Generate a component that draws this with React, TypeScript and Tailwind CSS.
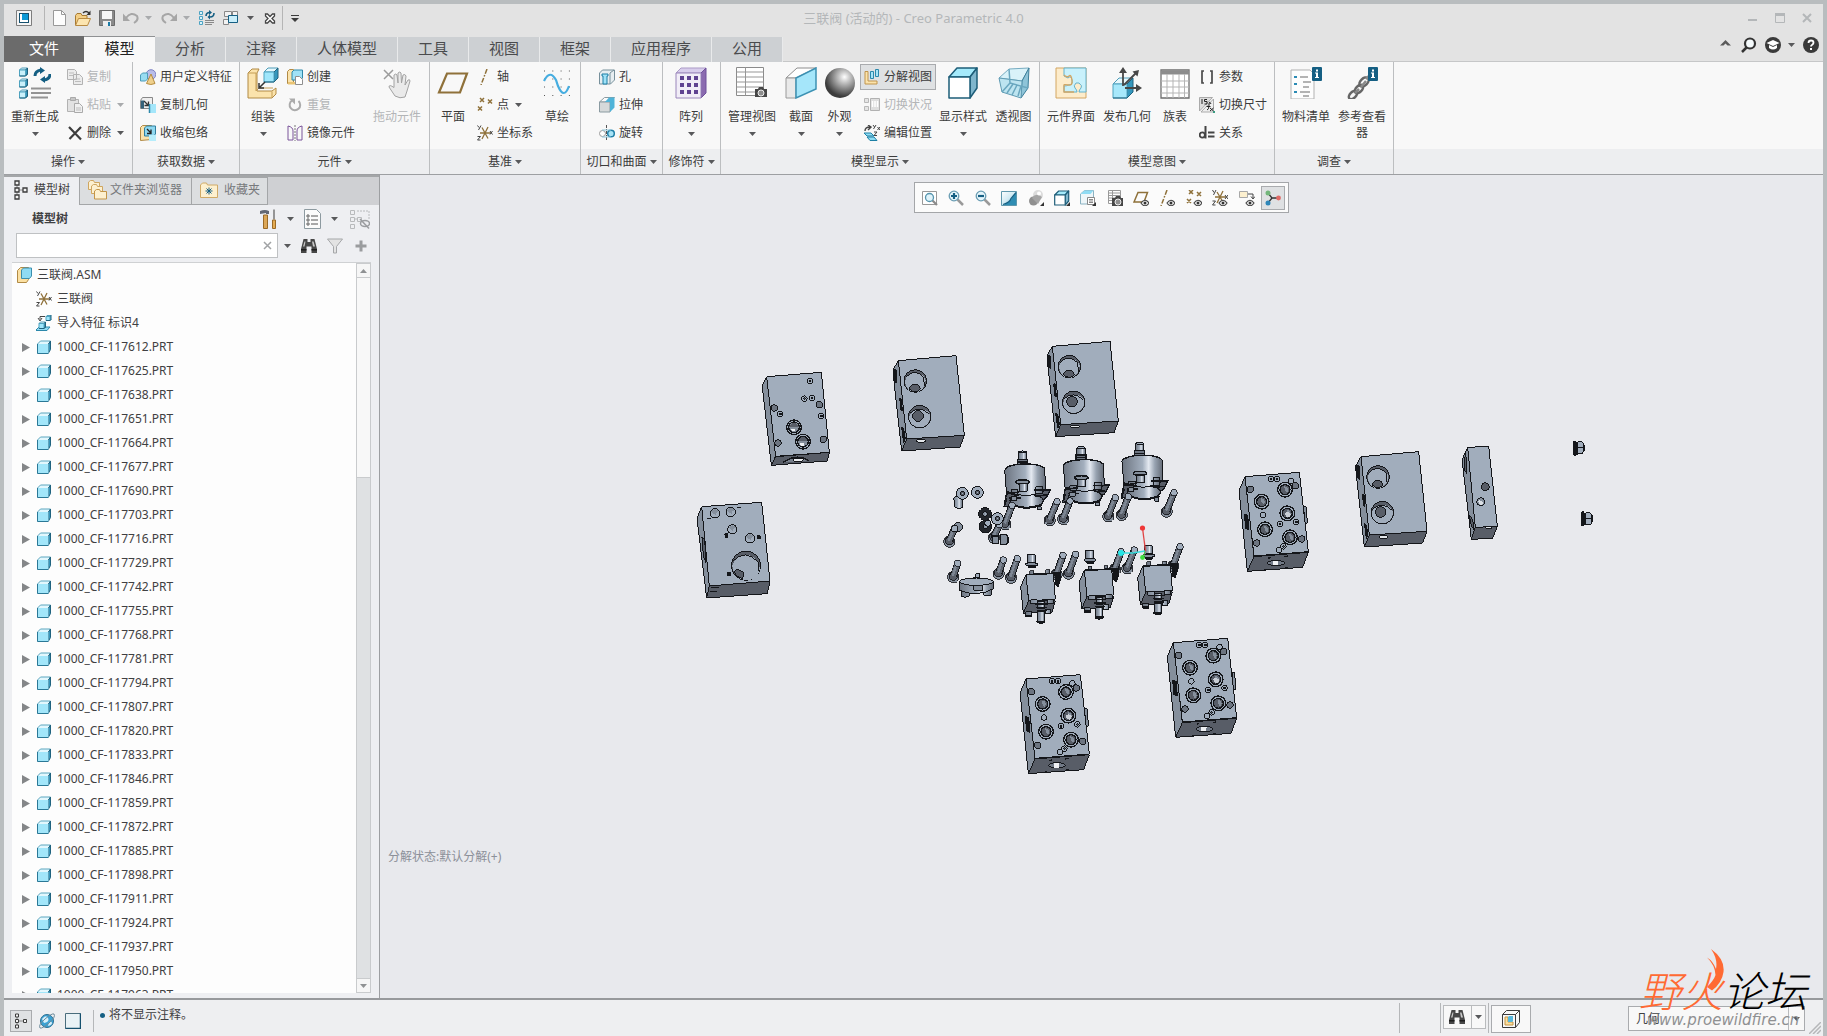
import React from "react";

type Kids = { children?: React.ReactNode };

/* ---------- drawing helpers ---------- */

function Ico({ s = 16, children }: Kids & { s?: 16 | 32 }) {
  return (
    <svg
      viewBox={s === 32 ? "0 0 32 32" : "0 0 16 16"}
      className={s === 32 ? "size-8 shrink-0" : "size-4 shrink-0"}
      fill="none"
      aria-hidden="true"
    >
      {children}
    </svg>
  );
}

function Down({ dim = false }: { dim?: boolean }) {
  return (
    <svg viewBox="0 0 7 4" className="h-1 w-[7px] shrink-0" aria-hidden="true">
      <path d="M0 0h7L3.5 4z" fill={dim ? "#a9abad" : "#58595b"} />
    </svg>
  );
}

/* blue box with a light top and a darker right side */
function Cube({ x, y, w, d, face = "#9fe6fb" }: { x: number; y: number; w: number; d: number; face?: string }) {
  return (
    <g stroke="#20637f" strokeWidth="1" strokeLinejoin="round">
      <path d={`M${x} ${y + d}l${d} ${-d}h${w}l${-d} ${d}z`} fill="#e6f8fd" stroke="#4f9cb8" />
      <path d={`M${x + w} ${y + d}l${d} ${-d}v${w}l${-d} ${d}z`} fill="#3597bd" />
      <path d={`M${x} ${y + d}h${w}v${w}h${-w}z`} fill={face} stroke="#4fa3c0" />
      <path d={`M${x} ${y + d + w}h${w}l${d} ${-d}`} />
    </g>
  );
}

function MiniBoxes() {
  return (
    <g>
      {[1, 12, 23].map((y) => (
        <Cube key={y} x={0.5} y={y} w={6} d={2} face="#c9f0fb" />
      ))}
    </g>
  );
}

function Camera({ x, y }: { x: number; y: number }) {
  return (
    <g>
      <path d={`M${x} ${y + 2}h3l1-2h4l1 2h3v8h-12z`} fill="#474747" />
      <circle cx={x + 6} cy={y + 6} r="3" fill="#8e8e8e" stroke="#eee" />
    </g>
  );
}

function Eye({ x, y }: { x: number; y: number }) {
  return (
    <g>
      <path d={`M${x} ${y + 3}q4-5.5 8 0q-4 5.5-8 0z`} fill="#fff" stroke="#474747" strokeWidth="1.2" />
      <circle cx={x + 4} cy={y + 3} r="1.5" fill="#333" />
    </g>
  );
}

function InfoBadge() {
  return (
    <g>
      <rect x="22" y="0" width="10" height="14" rx="1" fill="#155f83" />
      <path d="M26 2.500h2v2h-2zM25 5.500h3v4.500h1v1h-4v-1h1v-3.500h-1z" fill="#fff" />
    </g>
  );
}

const tan = "#8f713a";

function Axes() {
  return (
    <Ico>
      <path d="M3 8h11M5 2.500l6 11M11 2l-6 12" stroke={tan} strokeWidth="1.3" />
      <path d="M.5.500l1.500 2M4 .500l-2.500 4.500M.5 11.500h3l-3 3.500h3M13 6l2.500 3.500M15.500 6L13 9.500" stroke="#444" />
    </Ico>
  );
}

function Points() {
  return (
    <Ico>
      <path d="M3 1l4 4M7 1l-4 4M11 2.500l4 4M15 2.500l-4 4M1 9.500l4 4M5 9.500l-4 4" stroke={tan} strokeWidth="1.500" />
    </Ico>
  );
}

function AxisLine() {
  return (
    <Ico>
      <path d="M10 0L4 16" stroke={tan} strokeWidth="1.500" strokeDasharray="5 1.500 1.500 1.500" />
    </Ico>
  );
}

function TreeGlyph() {
  return (
    <svg viewBox="0 0 14 20" className="h-5 w-3.5 shrink-0" fill="none" aria-hidden="true">
      <path d="M3 5v10M3 10h6" stroke="#8a8a8a" />
      <path d="M1 1h4v4H1zM1 8h4v4H1zM1 15h4v4H1zM9 8h4v4H9z" stroke="#3d3d3d" strokeWidth="1.300" fill="#f4f4f4" />
    </svg>
  );
}

function Binoculars() {
  return (
    <Ico>
      <path d="M2.500 1h4v3h3V1h4l2.500 10v4h-5.500V8.500h-5V15H0v-4z" fill="#474747" />
      <path d="M2 8.500l1.500-5 1 0-1 5zM12 8.500l-1-5 1.500 0 1.500 5z" fill="#c9c9c9" />
      <path d="M0 11h5.500v1.500H0zM10.500 11H16v1.500h-5.500z" fill="#1d1d1d" />
    </Ico>
  );
}

/* ---------- ribbon icons, 32 px ---------- */

const big: Record<string, React.ReactNode> = {
  regen: (
    <Ico s={32}>
      <MiniBoxes />
      <path d="M16 9q0-5 6-6M31 7q0 5-6 6" stroke="#155f83" strokeWidth="3" />
      <path d="M21 0l5 3.500-5 3.500zM26 16l-5-3.500 5-3.500z" fill="#155f83" />
      <path d="M12 21.500h20M12 26h20M12 30.500h17" stroke="#939393" strokeWidth="2" />
    </Ico>
  ),
  assemble: (
    <Ico s={32}>
      <path d="M1 6l4-4h7l-2 4v18h15l4-3v6l-4 4H1z" fill="#fbe3ac" stroke="#b18a45" />
      <path d="M9 6v18M1.500 6h8M25 24.500v6M9 24l3-3h14" stroke="#c49d55" />
      <Cube x={17} y={1} w={10} d={4} />
      <path d="M18 15l-5 5M12 16v5h5" stroke="#333" strokeWidth="1.500" />
    </Ico>
  ),
  hand: (
    <Ico s={32}>
      <path d="M3 3l9 9M12 3l-9 9" stroke="#9b9b9b" strokeWidth="1.500" />
      <path
        d="M14 29l-6-9q0-3 5 .5V8q2-2 3 0l1 8V6q2-2 3 0l.5 10L22 8q2-1.500 3 1l-1 9 3-5q2-1 2 1l-3 10-2 6q-5 2-10-1z"
        fill="#eaeaea"
        stroke="#a2a2a2"
      />
    </Ico>
  ),
  plane: (
    <Ico s={32}>
      <path d="M10 6.500h20l-7 19H2z" stroke={tan} strokeWidth="2.200" />
    </Ico>
  ),
  sketch: (
    <Ico s={32}>
      <path d="M3 4h27M3 12h27M3 20h27M3 28.500h27" stroke="#555" strokeDasharray="1 7.300" />
      <path d="M3 14q6-12 12-1l2 6q6 14 11 0" stroke="#46ade0" strokeWidth="2.200" />
    </Ico>
  ),
  pattern: (
    <Ico s={32}>
      <path d="M1 6l5-5h25l-5 5z" fill="#d8cdec" stroke="#ab9bc6" />
      <path d="M26 6l5-5v25l-5 5z" fill="#8b6bb0" stroke="#6f519b" />
      <path d="M1 6h25v25H1z" fill="#f1edf7" stroke="#9a86bb" />
      <path
        d="M5 9h4v4H5zM12 9h4v4h-4zM19 9h4v4h-4zM5 16h4v4H5zM12 16h4v4h-4zM19 16h4v4h-4zM5 23h4v4H5zM12 23h4v4h-4zM19 23h4v4h-4z"
        fill="#5f4291"
      />
    </Ico>
  ),
  views: (
    <Ico s={32}>
      <path d="M.5.500h27v28H.5z" fill="#fff" stroke="#8b8b8b" />
      <path d="M.5 5h27M.5 10h27M.5 15h27M.5 20h27M.5 25h27M9.500.500v28" stroke="#979797" />
      <Camera x={19} y={20} />
    </Ico>
  ),
  section: (
    <Ico s={32}>
      <path d="M1 11L12 1h19L11 11z" fill="#fff" stroke="#8e8e8e" />
      <path d="M1 11h10v20H1z" fill="#e9e9e9" stroke="#9a9a9a" />
      <path d="M11 11L31 1v21L11 31z" fill="#a5e6fa" stroke="#3c91b3" strokeWidth="1.500" />
    </Ico>
  ),
  look: (
    <Ico s={32}>
      <defs>
        <radialGradient id="ball" cx=".65" cy=".3" r=".65">
          <stop offset="0" stopColor="#fff" />
          <stop offset=".3" stopColor="#c2c2c2" />
          <stop offset="1" stopColor="#3c3c3c" />
        </radialGradient>
      </defs>
      <circle cx="16" cy="16" r="15" fill="url(#ball)" />
    </Ico>
  ),
  shade: (
    <Ico s={32}>
      <g stroke="#1d5d78" strokeWidth="1.500" strokeLinejoin="round">
        <path d="M2 10L10 1h20l-7 9z" fill="#a5eafb" />
        <path d="M23 10l7-9v20l-7 10z" fill="#7fb6cd" />
        <path d="M2 10h21v21H2z" fill="#fff" />
      </g>
    </Ico>
  ),
  persp: (
    <Ico s={32}>
      <path d="M1 11L11 2l20-1-7 13z" fill="#d9f2f9" stroke="#76abc0" />
      <path d="M24 14l7-13-1 20-7 10z" fill="#8ec4d8" stroke="#3d7f9a" />
      <path d="M1 11l23 3-1 17-19-6z" fill="#bde4f0" stroke="#5f9bb3" />
      <path d="M11 2l1 14 18 5M12 16l-8 9M15 17l-6 9M19 18l-5 10M23 19l-3 10" stroke="#6aa7bf" strokeWidth="1.500" />
    </Ico>
  ),
  puzzle: (
    <Ico s={32}>
      <path d="M1 1h30v30H1z" fill="#fdeccb" stroke="#d3a663" />
      <path
        d="M9 1h22v24h-7q0-2 2-4t-2-5h-3q-3 3-1 5t2 4H9v-6q3 0 4-1 5 0 4-5t-4-2l-4-2z"
        fill="#c9f1fb"
        stroke="#64b2cd"
      />
      <path d="M9 8q3 3 5 1t3 4-4 5-4 1v6h10" stroke="#d3a663" strokeWidth="1.300" />
    </Ico>
  ),
  publish: (
    <Ico s={32}>
      <Cube x={2} y={11} w={14} d={6} face="#a7e8fb" />
      <path d="M12 19V3M14 21h15M13 18L26 5" stroke="#474747" strokeWidth="1.800" />
      <path d="M12 0l4 6H8zM31 21l-6 4v-8zM28 3l-6.500 1.500 5 5z" fill="#474747" />
    </Ico>
  ),
  table: (
    <Ico s={32}>
      <path d="M2 3h28v28H2z" fill="#fff" stroke="#6e6e6e" strokeWidth="1.300" />
      <path d="M2 5.500h28" stroke="#8c8c8c" strokeWidth="4" />
      <path d="M2 14h28M2 20h28M2 26h28M8 7v24M14 7v24M20 7v24M25.500 7v24" stroke="#b5b5b5" />
    </Ico>
  ),
  bom: (
    <Ico s={32}>
      <path d="M1 3h19l4 4v25H1z" fill="#fdfdfd" stroke="#b1b1b1" />
      <path d="M10 10h8M13 15h8M13 20h6M10 25h10M13 29h6" stroke="#9b9b9b" strokeWidth="1.300" />
      <path d="M4 9h3v2H4zM4 16h3v2H4zM4 24h3v2H4z" fill="#2b8bb5" />
      <InfoBadge />
    </Ico>
  ),
  chain: (
    <Ico s={32}>
      <g stroke="#666" strokeWidth="2.500">
        <ellipse cx="7" cy="28" rx="5" ry="3" transform="rotate(-45 7 28)" />
        <ellipse cx="13" cy="22" rx="5" ry="3" transform="rotate(-45 13 22)" />
        <ellipse cx="18" cy="15" rx="5.500" ry="3.500" transform="rotate(-45 18 15)" />
        <path d="M9 26l4-4M15 20l5-6M20 12l4-4" stroke="#8a8a8a" />
      </g>
      <InfoBadge />
    </Ico>
  ),
};

/* ---------- ribbon icons, 16 px ---------- */

const small: Record<string, React.ReactNode> = {
  copy: (
    <Ico>
      <path d="M.5.500h7l2 2v8h-9zM6.500 5.500h6l3 3v7h-9z" fill="#ececec" stroke="#b2b2b2" />
      <path d="M2 4h5M2 6.500h4M8 10h5M8 12.500h6" stroke="#bdbdbd" />
    </Ico>
  ),
  paste: (
    <Ico>
      <path d="M.5 2.500h11v12h-11z" fill="#e2e2e2" stroke="#b2b2b2" />
      <path d="M3.500.500h5v3h-5z" fill="#c6c6c6" stroke="#aaa" />
      <path d="M7.500 6.500h5l3 3v6h-8z" fill="#f0f0f0" stroke="#aaa" />
      <path d="M9 11h5M9 13h5" stroke="#bdbdbd" />
    </Ico>
  ),
  del: (
    <Ico>
      <path d="M2 2l12 12.500M14 2L2.500 14" stroke="#3d3d3d" strokeWidth="2.200" />
    </Ico>
  ),
  udf: (
    <Ico>
      <circle cx="11" cy="5.500" r="4.800" fill="#b9bde9" stroke="#7d82c4" />
      <path d="M.5 6l2-2h5v6l-2 2h-5z" fill="#98dcf2" stroke="#4d9cb9" />
      <path d="M11 5l4 9.500q-4 2-8.500 0z" fill="#efd08c" stroke="#b58c40" />
    </Ico>
  ),
  copygeo: (
    <Ico>
      <path d="M.5 3.500l2-3h10v9l-2 2h-10z" fill="#eee" stroke="#888" />
      <path d="M1 3.500h3v8H1z" fill="#35627a" />
      <path d="M4 4l4 4M8.500 4.500v4h-4" stroke="#333" strokeWidth="1.300" />
      <path d="M9 7h7v9H9z" fill="#a4e6fa" />
      <path d="M9.500 7v9" stroke="#2f89ab" strokeWidth="1.500" />
    </Ico>
  ),
  shrink: (
    <Ico>
      <path d="M.5 2.500l2-2h9v14l-11 1z" fill="#fbe3ac" stroke="#b18a45" />
      <path d="M4.500 3l2-2h9v8l-2 2h-9z" fill="#8ed8f0" stroke="#2f7f9f" />
      <path d="M7 4l4 4M11 4.500V8.500H7" stroke="#222" strokeWidth="1.300" />
      <path d="M9 10h7v6H9z" fill="#b6edfb" />
    </Ico>
  ),
  create: (
    <Ico>
      <path d="M.5 2.500l2-2h4v14h-6z" fill="#fbe3ac" stroke="#b18a45" />
      <path d="M1 13h8v2.500H1z" fill="#e9c474" />
      <path d="M5 3l2-2h8.500v8l-2 2H5z" fill="#9fe2f7" stroke="#2f89ab" />
      <path d="M8.500 7.500h4l3 3v5h-7z" fill="#fff" stroke="#8e8e8e" />
    </Ico>
  ),
  repeat: (
    <Ico>
      <path d="M5 3.500a5.300 5.300 0 1 0 6.500.5" stroke="#ababab" strokeWidth="2" />
      <path d="M2 1.500h6v6z" fill="#ababab" />
    </Ico>
  ),
  mirror: (
    <Ico>
      <path d="M1 1q5 1 5 5v9H1z" stroke="#7b549a" />
      <path d="M8 0v16" stroke="#777" strokeDasharray="2 1" />
      <path d="M15 1q-5 1-5 5v9h5z" stroke="#7b549a" />
    </Ico>
  ),
  axis: <AxisLine />,
  point: <Points />,
  csys: <Axes />,
  hole: (
    <Ico>
      <path d="M.5 4l3-3h12v10l-4 4H.5z" fill="#e7eef1" stroke="#77909b" />
      <path d="M11 4v11M11 4l4-3" stroke="#77909b" />
      <path d="M3 5h6v2H8v8H4V7H3z" fill="#9fe2f7" stroke="#1f7fa5" />
    </Ico>
  ),
  extrude: (
    <Ico>
      <path d="M.5 5l5-4.500h10L11 5z" fill="#fafafa" stroke="#8a9aa1" />
      <path d="M.5 5H11v10H.5z" fill="#d6d9da" stroke="#8a9aa1" />
      <path d="M11 5l4.500-4.500v10L11 15zM6 5L10 .500h5.500L11 5z" fill="#4fb3d8" />
    </Ico>
  ),
  revolve: (
    <Ico>
      <circle cx="3.500" cy="8.500" r="3" stroke="#9a9a9a" fill="#fff" />
      <circle cx="12" cy="8.500" r="3.300" stroke="#2080a8" strokeWidth="1.500" fill="#a8e3f6" />
      <path d="M7.500 0v16" stroke="#555" strokeDasharray="3 1 1 1" />
      <path d="M3 5h9M3 12h9" stroke="#8ec6da" />
    </Ico>
  ),
  explode: (
    <Ico>
      <path d="M1 2.500h3v9.500h9v3H1z" fill="#fbe3ac" stroke="#c1954c" />
      <path d="M6.500 2.500h3v7h-3zM11.500.500h3v7h-3z" fill="#a7e4f7" stroke="#2c88ab" />
    </Ico>
  ),
  state: (
    <Ico>
      <path d="M.5 1.500h4v4h-4zM.5 9.500h4v4h-4z" fill="#e5e5e5" stroke="#b8b8b8" />
      <path d="M6.500 1.500h9v12h-9z" fill="#dedede" stroke="#b1b1b1" />
      <path d="M8.500 4v6M11 4v6M13.500 4v6" stroke="#fff" strokeWidth="1.500" />
    </Ico>
  ),
  editpos: (
    <Ico>
      <path d="M1 6q0-4 5-4M4 0l3 2-3 3" stroke="#444" strokeWidth="1.400" />
      <path d="M9 0l1.500 2M12 0L9.500 4M13.500 2l2.500 3M16 2l-2.500 3M10 7h3l-3 3.500h3" stroke="#444" />
      <path d="M0 8h7l3 3H3zM3 12h7l3 3.500H6z" fill="#8edcf4" stroke="#1d80a5" />
    </Ico>
  ),
  params: (
    <Ico>
      <path d="M5 2H3v12h2M11 2h2v12h-2" stroke="#4a4a4a" strokeWidth="1.700" />
    </Ico>
  ),
  dims: (
    <Ico>
      <path d="M.5.500h13L.5 14z" fill="#ddd" stroke="#aaa" />
      <path d="M14.500 2v13H2z" fill="#efefef" stroke="#aaa" />
      <path d="M3 2v5M5.500 7h2.500V4.500H5.500V2.500H8M8 13q2 0 2-5t2-1M7.500 9.500h4M11 11l3.500 3M14.500 11L11 14" stroke="#222" />
      <path d="M14 14h2v2h-2z" fill="#3a9a80" />
    </Ico>
  ),
  rel: (
    <Ico>
      <circle cx="3.300" cy="10" r="2.600" stroke="#444" strokeWidth="1.800" />
      <path d="M6.500 1v12.500" stroke="#444" strokeWidth="2" />
      <path d="M9 7.500h6.500M9 11.500h6.500" stroke="#444" strokeWidth="1.800" />
    </Ico>
  ),
};

/* ---------- ribbon building blocks ---------- */

function Big({ icon, label, w, arrow, dim }: { icon: string; label: string; w: string; arrow?: boolean; dim?: boolean }) {
  return (
    <button
      type="button"
      disabled={dim}
      className={`flex shrink-0 flex-col items-center pt-[5px] ${w} ${dim ? "text-[#b3b5b7]" : "text-[#3c3c3c]"}`}
    >
      {big[icon]}
      <span className="mt-[10px] w-12 text-center leading-4 whitespace-nowrap">{label}</span>
      {arrow && (
        <span className="mt-[7px] flex">
          <Down />
        </span>
      )}
    </button>
  );
}

function Row({ icon, label, arrow, dim, on }: { icon: string; label: string; arrow?: boolean; dim?: boolean; on?: boolean }) {
  return (
    <button
      type="button"
      disabled={dim}
      aria-pressed={on}
      className={`flex h-[26px] items-center gap-1 whitespace-nowrap border ${
        on ? "border-[#a9abae] bg-[#dfe1e3] px-[3px]" : "border-transparent"
      } ${dim ? "text-[#b3b5b7]" : "text-[#3c3c3c]"}`}
    >
      {small[icon]}
      <span>{label}</span>
      {arrow && (
        <span className="ml-0.5 flex">
          <Down dim={dim} />
        </span>
      )}
    </button>
  );
}

function Col({ children, pad = "" }: Kids & { pad?: string }) {
  return <div className={`flex shrink-0 flex-col gap-0.5 pt-0.5 ${pad}`}>{children}</div>;
}

function Group({ name, w, children }: Kids & { name: string; w: string }) {
  return (
    <section aria-label={name} className={`flex shrink-0 flex-col border-r border-[#bcbec0] ${w}`}>
      <div className="flex h-[87px] bg-[#f8f8f8]">{children}</div>
      <button type="button" className="flex h-[25px] items-center justify-center gap-[3px] bg-[#edeef0] text-[#3c3c3c]">
        <span>{name}</span>
        <Down />
      </button>
    </section>
  );
}

/* ---------- title bar ---------- */

function QuickAccess() {
  return (
    <div className="flex items-center">
      <button type="button" aria-label="Creo" className="ml-3">
        <Ico>
          <path d="M.5.500h15v15H.5z" fill="#f4f4f4" stroke="#7d7d7d" />
          <path d="M3 3h10v10H3z" fill="#15506e" />
          <path d="M4 4h8v8H4z" fill="#fff" />
          <path d="M6 4h6v6H6z" fill="#0c99d6" />
        </Ico>
      </button>
      <span className="ml-3 h-6 w-px bg-[#b5b5b5]" />
      <button type="button" aria-label="新建" className="ml-[6px]">
        <Ico>
          <path d="M2.500.500h8l4 4v11h-12z" fill="#fdfdfd" stroke="#999" />
          <path d="M10.500.500v4h4" stroke="#999" />
        </Ico>
      </button>
      <button type="button" aria-label="打开" className="ml-2">
        <Ico>
          <path d="M.5 15V5.500l1.500-2h4l1 2h5v3" fill="#f3ce84" stroke="#a77a32" />
          <path d="M.5 15.500l3-7h12l-3 7z" fill="#fce5b0" stroke="#b88a42" />
          <path d="M8 3q3-3 6 0" stroke="#333" strokeWidth="1.500" />
          <path d="M15.500.500v4.500h-4z" fill="#333" />
        </Ico>
      </button>
      <button type="button" aria-label="保存" className="ml-2">
        <Ico>
          <path d="M.5.500h15v15h-15z" fill="#8a8a8a" stroke="#6b6b6b" />
          <path d="M3 1h10v8H3z" fill="#f7f7f7" />
          <path d="M4 11h8v5H4z" fill="#eee" />
          <path d="M9 12h2v4H9z" fill="#1b7aa5" />
        </Ico>
      </button>
      <button type="button" aria-label="撤消" className="ml-2 flex items-center gap-1.5">
        <Ico>
          <path d="M3 8q5-7 11-2 2 4-3 7" stroke="#a6a6a6" strokeWidth="2" />
          <path d="M0 3.500V11h7z" fill="#a6a6a6" />
        </Ico>
        <Down dim />
      </button>
      <button type="button" aria-label="重做" className="ml-[9px] flex items-center gap-1.5">
        <Ico>
          <path d="M13 8Q8 1 2 6q-2 4 3 7" stroke="#a6a6a6" strokeWidth="2" />
          <path d="M16 3.500V11H9z" fill="#a6a6a6" />
        </Ico>
        <Down dim />
      </button>
      <button type="button" aria-label="重新生成模型" className="ml-[9px]">
        <Ico>
          <path d="M.5 1.500h3v3h-3zM.5 6.500h3v3h-3zM.5 11.500h3v3h-3z" fill="#d9f3fb" stroke="#4ba3c3" />
          <path d="M7 6q0-3 3-3.500M15 3q0 4-4 4" stroke="#155f83" strokeWidth="1.600" />
          <path d="M10 0l3 2.500-3 2.500zM11 9.500L8.500 7 11 4.500z" fill="#155f83" />
          <path d="M6 10.500h9M6 12.500h9M6 14.500h7" stroke="#888" />
        </Ico>
      </button>
      <button type="button" aria-label="窗口" className="ml-2 flex items-center gap-2">
        <Ico>
          <path d="M1.500 1.500h7v5h-7zM9.500 1.500h5v5h-5zM.5 9.500h5v5h-5z" fill="#f2f2f2" stroke="#888" />
          <path d="M5.500 5.500h9v7h-9z" fill="#c9eefa" stroke="#155f83" />
        </Ico>
        <Down />
      </button>
      <button type="button" aria-label="关闭窗口" className="ml-2">
        <Ico>
          <path d="M3.500 4h2l2.500 2.500L10.500 4h2v2L10 8.500l2.500 2.500v2h-2L8 10.500 5.500 13h-2v-2L6 8.500 3.500 6z" fill="#fff" stroke="#444" strokeWidth="1.300" />
        </Ico>
      </button>
      <span className="ml-1 h-6 w-px bg-[#b5b5b5]" />
      <button type="button" aria-label="自定义快速访问工具栏" className="ml-2">
        <svg viewBox="0 0 8 7" className="h-[7px] w-2" aria-hidden="true">
          <path d="M0 0h8v1H0zM0 3h8L4 7z" fill="#3d3d3d" />
        </svg>
      </button>
    </div>
  );
}

function WindowButtons() {
  return (
    <div className="flex items-center justify-end gap-[11px] pr-2 text-[#b4b7b9]">
      <button type="button" aria-label="最小化">
        <Ico>
          <path d="M3 10h9" stroke="currentColor" strokeWidth="2" />
        </Ico>
      </button>
      <button type="button" aria-label="最大化">
        <Ico>
          <path d="M3.500 3.500h9v9h-9z" stroke="currentColor" />
          <path d="M3 3h10v3H3z" fill="currentColor" />
        </Ico>
      </button>
      <button type="button" aria-label="关闭">
        <Ico>
          <path d="M4 4l8 8M12 4l-8 8" stroke="currentColor" strokeWidth="2" />
        </Ico>
      </button>
    </div>
  );
}

const tabs = ["分析", "注释", "人体模型", "工具", "视图", "框架", "应用程序", "公用"];

function TabRow() {
  return (
    <nav className="flex h-[26px] items-stretch text-[15px] leading-none text-[#4a4b4d]">
      <button type="button" className="w-20 bg-[#6b6b6b] pb-0.5 text-white">文件</button>
      <button type="button" className="w-[71px] border-t border-[#8f9193] bg-[#f8f8f8] pb-0.5 text-[#222]">模型</button>
      {tabs.map((t) => (
        <button
          key={t}
          type="button"
          className="mt-px border-r border-[#e9eaeb] bg-[#cdd0d3] px-5 pb-0.5"
        >
          {t}
        </button>
      ))}
      <div className="flex flex-1 items-center justify-end border-b border-[#c6c7c8] pr-1 pb-2">
        <button type="button" aria-label="最小化功能区" className="mr-2.5 pb-1">
          <svg viewBox="0 0 11 6" className="h-1.5 w-[11px]" aria-hidden="true">
            <path d="M5.500 0L11 5.500H7.500L5.500 3.500 3.500 5.500H0z" fill="#5a5a5a" />
          </svg>
        </button>
        <button type="button" aria-label="命令搜索" className="mr-2">
          <Ico>
            <circle cx="9" cy="6.500" r="5" stroke="#333" strokeWidth="2.200" fill="#f5fafc" />
            <path d="M5.500 10.500L1 15" stroke="#333" strokeWidth="2.500" />
          </Ico>
        </button>
        <button type="button" aria-label="学习" className="mr-2 flex items-center gap-[7px]">
          <Ico>
            <circle cx="8" cy="8" r="8" fill="#3a3a3a" />
            <path d="M8 3l6.500 3L8 9 1.500 6z" fill="#fff" />
            <path d="M4 8l4 2 4-2v3q-4 3-8 0z" fill="#fff" />
          </Ico>
          <Down />
        </button>
        <button type="button" aria-label="帮助">
          <Ico>
            <circle cx="8" cy="8" r="8" fill="#3a3a3a" />
            <path d="M5.500 6q0-2.500 2.500-2.500t2.500 2.300q0 1.200-1.300 1.900T8 9.500" stroke="#fff" strokeWidth="1.800" />
            <path d="M7 11h2v2H7z" fill="#fff" />
          </Ico>
        </button>
      </div>
    </nav>
  );
}

function Ribbon() {
  return (
    <div className="flex border-b border-[#9d9fa2] bg-[#f8f8f8]">
      <Group name="操作" w="w-[129px]">
        <Big icon="regen" label="重新生成" w="w-[62px]" arrow />
        <Col>
          <Row icon="copy" label="复制" dim />
          <Row icon="paste" label="粘贴" arrow dim />
          <Row icon="del" label="删除" arrow />
        </Col>
      </Group>
      <Group name="获取数据" w="w-[107px]">
        <Col pad="pl-[6px]">
          <Row icon="udf" label="用户定义特征" />
          <Row icon="copygeo" label="复制几何" />
          <Row icon="shrink" label="收缩包络" />
        </Col>
      </Group>
      <Group name="元件" w="w-[190px]">
        <Big icon="assemble" label="组装" w="w-[46px]" arrow />
        <Col>
          <Row icon="create" label="创建" />
          <Row icon="repeat" label="重复" dim />
          <Row icon="mirror" label="镜像元件" />
        </Col>
        <span className="mt-2.5 ml-2 h-[67px] w-px bg-[#dcdddf]" />
        <Big icon="hand" label="拖动元件" w="w-[66px]" dim />
      </Group>
      <Group name="基准" w="w-[151px]">
        <Big icon="plane" label="平面" w="w-[46px]" />
        <Col>
          <Row icon="axis" label="轴" />
          <Row icon="point" label="点" arrow />
          <Row icon="csys" label="坐标系" />
        </Col>
        <Big icon="sketch" label="草绘" w="w-[46px]" />
      </Group>
      <Group name="切口和曲面" w="w-[82px]">
        <Col pad="pl-[17px]">
          <Row icon="hole" label="孔" />
          <Row icon="extrude" label="拉伸" />
          <Row icon="revolve" label="旋转" />
        </Col>
      </Group>
      <Group name="修饰符" w="w-[58px]">
        <Big icon="pattern" label="阵列" w="w-[56px]" arrow />
      </Group>
      <Group name="模型显示" w="w-[319px]">
        <Big icon="views" label="管理视图" w="w-[62px]" arrow />
        <Big icon="section" label="截面" w="w-[36px]" arrow />
        <Big icon="look" label="外观" w="w-[41px]" arrow />
        <Col>
          <Row icon="explode" label="分解视图" on />
          <div className="flex flex-col gap-0.5 pl-[3px]">
            <Row icon="state" label="切换状况" dim />
            <Row icon="editpos" label="编辑位置" />
          </div>
        </Col>
        <Big icon="shade" label="显示样式" w="w-[54px]" arrow />
        <Big icon="persp" label="透视图" w="w-[47px]" />
      </Group>
      <Group name="模型意图" w="w-[235px]">
        <Big icon="puzzle" label="元件界面" w="w-[62px]" />
        <Big icon="publish" label="发布几何" w="w-[50px]" />
        <Big icon="table" label="族表" w="w-[46px]" />
        <Col>
          <Row icon="params" label="参数" />
          <Row icon="dims" label="切换尺寸" />
          <Row icon="rel" label="关系" />
        </Col>
      </Group>
      <Group name="调查" w="w-[119px]">
        <Big icon="bom" label="物料清单" w="w-[62px]" />
        <button type="button" className="flex w-[50px] flex-col items-center pt-[5px] text-[#3c3c3c]">
          {big.chain}
          <span className="mt-[10px] w-12 text-center leading-4">参考查看器</span>
        </button>
      </Group>
      <div className="flex flex-1 flex-col justify-end">
        <div className="h-[25px] bg-[#edeef0]" />
      </div>
    </div>
  );
}

/* ---------- model tree ---------- */

const parts = Array.from({ length: 28 }, (_, i) => `1000_CF-${117612 + i * 13}.PRT`);

function FolderIcon({ star }: { star?: boolean }) {
  return star ? (
    <svg viewBox="0 0 18 16" className="h-4 w-[18px]" fill="none" aria-hidden="true">
      <path d="M.5 15.500V3l2-2h4l1 2h10v12.500z" fill="#fdf0cf" stroke="#d0aa66" />
      <path d="M9 5.500v7M5.500 9h7M6.500 6.500l5 5M11.500 6.500l-5 5" stroke="#155f83" />
    </svg>
  ) : (
    <svg viewBox="0 0 20 20" className="size-5" fill="none" aria-hidden="true">
      <path d="M.5 9.500V2l2-1.500h3l1 2h5v7z" fill="#fdf0cf" stroke="#cfa660" />
      <path d="M3.500 13.500V6l2-1.500h3l1 2h5v7z" fill="#fdf0cf" stroke="#cfa660" />
      <path d="M6.500 19V11l2-1.500h3l1 2h6V19z" fill="#fdf0cf" stroke="#c39548" />
    </svg>
  );
}

function ModelTree() {
  return (
    <aside className="flex w-[376px] shrink-0 flex-col border-r border-[#9d9fa2] bg-[#eeeff2] text-[#3f4042]">
      <div className="flex h-[30px] items-stretch border-t-2 border-[#a4a6a8] bg-[#cfd0d3]">
        <button type="button" className="flex w-[75px] items-center gap-1.5 bg-[#eeeff2] pb-0.5 pl-2.5">
          <TreeGlyph />
          模型树
        </button>
        <button type="button" className="flex w-[113px] items-center gap-0.5 border border-[#a4a6a8] bg-[#dcdee0] pb-0.5 pl-2 text-[#77797c]">
          <FolderIcon />
          文件夹浏览器
        </button>
        <button type="button" className="flex w-[76px] items-center gap-1.5 border border-l-0 border-[#a4a6a8] bg-[#dcdee0] pb-0.5 pl-2 text-[#77797c]">
          <FolderIcon star />
          收藏夹
        </button>
      </div>
      <div className="flex h-7 items-center pr-[9px] pl-7">
        <h2 className="flex-1 font-bold">模型树</h2>
        <button type="button" aria-label="设置" className="flex items-center gap-2.5">
          <svg viewBox="0 0 18 20" className="h-5 w-[18px]" fill="none" aria-hidden="true">
            <path d="M1 2q5-2 9 0v3H7V4L1 5z" fill="#626875" />
            <path d="M4.500 6h4v13.500h-4z" fill="#dca758" stroke="#9b6a26" />
            <path d="M15 .500v10" stroke="#777" strokeWidth="1.500" />
            <path d="M13.500 11h3v8.500h-3z" fill="#e4ab52" stroke="#9b6a26" />
          </svg>
          <Down />
        </button>
        <button type="button" aria-label="显示" className="ml-2.5 flex items-center gap-2.5">
          <svg viewBox="0 0 17 20" className="h-5 w-[17px]" fill="none" aria-hidden="true">
            <path d="M.5.500h12l4 4v15H.5z" fill="#fbfbfb" stroke="#8d9aa0" />
            <path d="M7 7h7M7 11h7M7 15h7" stroke="#555" />
            <path d="M3 6h2v2H3zM3 10h2v2H3zM3 14h2v2H3z" stroke="#666" />
          </svg>
          <Down />
        </button>
        <button type="button" aria-label="隐藏项" className="ml-3">
          <svg viewBox="0 0 20 20" className="size-5" fill="none" aria-hidden="true">
            <path d="M.5 1.500h4v4h-4zM.5 8.500h4v4h-4zM.5 15.500h4v4h-4zM7.500 8.500h4v4h-4zM4 10h4" stroke="#b8babc" />
            <path d="M7 2h12v8" stroke="#b8babc" strokeDasharray="2 1" />
            <ellipse cx="15" cy="14.500" rx="4.500" ry="3" stroke="#9b9da0" strokeWidth="1.500" />
            <path d="M10 10l9 9.500" stroke="#9b9da0" strokeWidth="1.500" />
          </svg>
        </button>
      </div>
      <div className="flex items-center pb-1 pl-3">
        <div className="flex h-[25px] w-[262px] items-center border border-[#bfc1c3] bg-white">
          <input aria-label="搜索模型树" className="h-full min-w-0 flex-1 bg-transparent px-2 outline-none" />
          <button type="button" aria-label="清除" className="mr-[5px]">
            <svg viewBox="0 0 9 9" className="size-[9px]" aria-hidden="true">
              <path d="M1 1l7 7M8 1L1 8" stroke="#a1a3a5" strokeWidth="1.500" />
            </svg>
          </button>
        </div>
        <button type="button" aria-label="搜索选项" className="ml-1.5"><Down /></button>
        <button type="button" aria-label="查找" className="ml-2.5"><Binoculars /></button>
        <button type="button" aria-label="过滤" className="ml-2.5">
          <Ico>
            <path d="M.5 1h15L9.500 8.500V15l-3 0V8.500z" fill="#e3e3e3" stroke="#a5a7a9" />
          </Ico>
        </button>
        <button type="button" aria-label="添加" className="ml-2.5">
          <Ico>
            <path d="M8 2.500v11M2.500 8h11" stroke="#9a9c9e" strokeWidth="3" />
          </Ico>
        </button>
      </div>
      <div className="mr-2 mb-[5px] ml-2 flex min-h-0 flex-1 border-t border-[#cfd1d3] bg-[#fdfdfd]">
        <ul className="flex-1 overflow-hidden">
          <li className="flex h-6 items-center gap-1 pl-[5px]">
            <Ico>
              <path d="M.5 3.500l3-3h8v12l-2 3h-9z" fill="#fbe0a2" stroke="#b18a45" />
              <path d="M4.500 3l2-2h8v8l-2 2.500h-8z" fill="#8fdcf4" stroke="#3c8fae" />
            </Ico>
            三联阀.ASM
          </li>
          <li className="flex h-6 items-center gap-[5px] pl-6"><Axes />三联阀</li>
          <li className="flex h-6 items-center gap-[5px] pl-6">
            <Ico>
              <Cube x={10} y={0.5} w={4} d={1} />
              <path d="M9 1.500H4v3M2 3l2 3 2-3" stroke="#444" />
              <path d="M0 15l3-3h11l-3 3.500H0z" fill="#8fdcf4" stroke="#2c88ab" />
              <Cube x={3} y={7} w={5} d={1.500} />
            </Ico>
            导入特征 标识4
          </li>
          {parts.map((p) => (
            <li key={p} className="flex h-6 items-center pl-2.5">
              <button type="button" aria-label={`展开 ${p}`} className="mr-1.5">
                <svg viewBox="0 0 8 9" className="h-[9px] w-2" aria-hidden="true">
                  <path d="M0 0l8 4.500L0 9z" fill="#848688" />
                </svg>
              </button>
              <Ico>
                <path d="M1.500 5L4.500 2h10l-2 3v9h-11z" fill="#e2f7fd" stroke="#5ba6bf" />
                <path d="M12.500 5l2-3v8.500l-2 3.500z" fill="#3896bb" stroke="#20637f" />
                <path d="M1.500 5h11v9h-11z" fill="#a2e6fa" />
                <path d="M1.500 5v9.500h11" stroke="#2b7896" />
              </Ico>
              <span className="ml-[5px]">{p}</span>
            </li>
          ))}
        </ul>
        <div className="flex w-[15px] flex-col border border-[#c9cbcd] bg-[#dfe1e3]">
          <button type="button" aria-label="向上滚动" className="flex h-[14px] items-center justify-center border-b border-[#c9cbcd] bg-[#f6f6f6]">
            <svg viewBox="0 0 7 4" className="h-1 w-[7px]" aria-hidden="true"><path d="M0 4h7L3.500 0z" fill="#8f9193" /></svg>
          </button>
          <div className="h-[200px] border-b border-[#c9cbcd] bg-[#f8f8f8]" />
          <button type="button" aria-label="向下滚动" className="mt-auto flex h-[14px] items-center justify-center border-t border-[#c9cbcd] bg-[#f6f6f6]">
            <svg viewBox="0 0 7 4" className="h-1 w-[7px]" aria-hidden="true"><path d="M0 0h7L3.500 4z" fill="#8f9193" /></svg>
          </button>
        </div>
      </div>
    </aside>
  );
}

/* ---------- graphics toolbar ---------- */

function Corner() {
  return <path d="M16 12v4h-4z" fill="#333" />;
}

function Lens({ sign }: { sign: string }) {
  return (
    <>
      <path d="M9.500 9.500L15 15" stroke="#9a9a9a" strokeWidth="2.500" />
      <circle cx="6" cy="6" r="4.800" fill="#e5f5fb" stroke="#6a9db3" strokeWidth="1.300" />
      <path d={sign} stroke="#155f83" strokeWidth="2.200" />
    </>
  );
}

const viewTools: { name: string; art: React.ReactNode; on?: boolean }[] = [
  {
    name: "重新调整",
    art: (
      <>
        <path d="M.5 1.500h14v13H.5z" fill="#fff" stroke="#999" />
        <path d="M10.500 10.500L15 15" stroke="#8a8a8a" strokeWidth="2.200" />
        <circle cx="7.500" cy="7.500" r="4" fill="#e0f3fa" stroke="#5594ad" strokeWidth="1.300" />
      </>
    ),
  },
  { name: "放大", art: <Lens sign="M3 6h6M6 3v6" /> },
  { name: "缩小", art: <Lens sign="M3 6h6" /> },
  {
    name: "重画",
    art: (
      <>
        <defs>
          <linearGradient id="sheet" x2="1" y2="1">
            <stop offset="0" stopColor="#fff" />
            <stop offset=".5" stopColor="#cfeaf3" />
            <stop offset="1" stopColor="#2c86ab" />
          </linearGradient>
        </defs>
        <path d="M.5 1.500h15v14H.5z" fill="url(#sheet)" stroke="#5f98ad" />
        <path d="M2 15q7-2 9-7l4-5v12z" fill="#2f8db3" />
        <path d="M2 14.500q7-2 8-6l5-6" stroke="#155f83" strokeWidth="1.200" />
      </>
    ),
  },
  {
    name: "渲染选项",
    art: (
      <>
        <circle cx="10" cy="5" r="5" fill="#dcdcdc" />
        <circle cx="5.500" cy="11" r="4.500" fill="#909090" />
        <path d="M4 8q4-6 10-1l-4 7z" fill="#a5a5a5" />
        <circle cx="11" cy="3.500" r="2" fill="#fff" />
        <Corner />
      </>
    ),
  },
  {
    name: "显示样式",
    art: (
      <>
        <g stroke="#1d5d78" strokeWidth="1.200" strokeLinejoin="round">
          <path d="M.7 5l4-4h10l-3.500 4z" fill="#a5eafb" />
          <path d="M11.200 5l3.500-4v10l-3.500 4z" fill="#7fb6cd" />
          <path d="M.7 5h10.500v10H.7z" fill="#fff" />
        </g>
        <Corner />
      </>
    ),
  },
  {
    name: "已保存方向",
    art: (
      <>
        <path d="M.5 4l4-3.500h9v10l-3 3.500H.5z" fill="#eef6f9" stroke="#8bb3c2" />
        <path d="M.5 4l4-3.500h9L10.500 4z" fill="#8fdcf4" />
        <path d="M7.500 7.500h7v7h-7z" fill="#fff" stroke="#888" />
        <path d="M9 9.500h4M9 11h4M9 12.500h4" stroke="#888" />
        <Corner />
      </>
    ),
  },
  {
    name: "视图管理器",
    art: (
      <>
        <path d="M1.500.500h12v13h-12z" fill="#fff" stroke="#999" />
        <path d="M1.500 3h12M1.500 5.500h12M1.500 8h12M1.500 10.500h12M5.500.500v13" stroke="#999" />
        <Camera x={5} y={6} />
      </>
    ),
  },
  { name: "平面显示", art: (<><path d="M5 2.500h9.500L11 12H1z" stroke={tan} strokeWidth="1.500" /><Eye x={8} y={10} /></>) },
  { name: "轴显示", art: (<><path d="M8 0L2 16" stroke={tan} strokeWidth="1.500" strokeDasharray="5 1.500 1.500 1.500" /><Eye x={8} y={10} /></>) },
  { name: "点显示", art: (<><path d="M3 0l4 4M7 0L3 4M11 2l4 4M15 2l-4 4M1 9l4 4M5 9l-4 4" stroke={tan} strokeWidth="1.500" /><Eye x={8} y={10} /></>) },
  {
    name: "坐标系显示",
    art: (
      <>
        <path d="M3 7h11M5 2l6 10M11 1L5 13" stroke={tan} strokeWidth="1.300" />
        <path d="M.5 0L2 2.500M4 0L1.500 5M.5 11h3l-3 4h3M13 5l3 4M16 5l-3 4" stroke="#444" />
        <Eye x={7} y={10} />
      </>
    ),
  },
  {
    name: "注释显示",
    art: (
      <>
        <path d="M.5 1.500h8v6h-8z" fill="#fdf0cf" stroke="#a8a8a8" />
        <path d="M9 4h5v4M12 6.500l2 2.500 2-2.500" stroke="#444" />
        <Eye x={7} y={10} />
      </>
    ),
  },
  {
    name: "旋转中心",
    on: true,
    art: (
      <>
        <path d="M3 3l4 5h6M7 8l-4 5" stroke="#333" strokeWidth="1.300" />
        <circle cx="3" cy="3" r="2.500" fill="#72b57a" />
        <circle cx="13.500" cy="8" r="2.400" fill="#e06a66" />
        <circle cx="3" cy="13" r="2.500" fill="#2e86b8" />
      </>
    ),
  },
];

function ViewToolbar() {
  return (
    <div role="toolbar" className="absolute top-[7px] left-[534px] flex h-[31px] w-[375px] items-center justify-between border border-[#a4a6a9] bg-[#fbfbfb] px-[3px]">
      {viewTools.map((t) => (
        <button
          key={t.name}
          type="button"
          aria-label={t.name}
          aria-pressed={t.on}
          className={`flex size-6 items-center justify-center border ${t.on ? "border-[#a9abae] bg-[#dfe1e3]" : "border-transparent"}`}
        >
          <Ico>{t.art}</Ico>
        </button>
      ))}
    </div>
  );
}

/* ---------- exploded assembly ---------- */

const front = "#a1adbc";
const side = "#858f9c";
const under = "#585d67";
const ink = "#14161a";

/* two-bore valve block */
function BoreBlock({ x, y }: { x: number; y: number }) {
  return (
    <g transform={`translate(${x} ${y})`} stroke={ink} strokeWidth="3">
      <path d="M0 0L-15 26v18L10 271 25 235z" fill={side} />
      <path d="M-14 28l8 0 2 40-8-6zM4 112l5 2 3 38-4-4zM10 200l6 4 5 30-5 12z" fill={ink} />
      <path d="M25 235L198 224 185 259 10 271z" fill={under} />
      <path d="M0 0L173-15 198 224 25 235z" fill={front} />
      <g strokeWidth="3">
        <circle cx="51" cy="61" r="34" fill={under} />
        <path d="M20 62q4-24 30-26 26 2 32 22 0 26-24 36-34 4-38-32z" fill={front} stroke="none" />
        <path d="M22 50q28-30 54 0l2 26" fill="none" />
        <path d="M33 85q4-14 17-14t16 14q-14 16-33 0z" fill={under} />
        <circle cx="64" cy="168" r="34" fill={under} />
        <path d="M32 172q2-24 32-26t32 24q-4 28-32 30-28-2-32-28z" fill={front} stroke="none" />
        <path d="M34 158q30-26 58 2" fill="none" />
        <circle cx="59" cy="166" r="16" fill={under} />
        <ellipse cx="68" cy="241" rx="14" ry="4" fill="#e3e6ea" />
      </g>
    </g>
  );
}

const ports = [[120, 39], [50, 75], [127, 110], [60, 158], [135, 182]];
const bolts = [[16, 38], [151, 27], [35, 199], [170, 187]];
const pins = [[54, 116], [139, 13], [102, 220]];
const rings = [[78, 7], [96, 7], [105, 142], [115, 209], [154, 136]];

/* directional valve block with five ports */
function PortBlock({ x, y }: { x: number; y: number }) {
  return (
    <g transform={`translate(${x} ${y})`} stroke={ink} strokeWidth="3">
      <path d="M176 88l8 2 3 50-8 4z" fill={side} />
      <path d="M0 0L-17 40v10L7 284 27 240z" fill={side} />
      <path d="M-2 112l10 4 4 44-10-4z" fill={ink} />
      <path d="M27 240L190 227 173 272 7 284z" fill={under} />
      <path d="M0 0L163-13 190 225 27 238z" fill={front} />
      <g strokeWidth="3">
        {ports.map(([a, b]) => (
          <g key={`${a}${b}`}>
            <circle cx={a} cy={b} r="22" fill={front} strokeWidth="4" />
            <circle cx={a} cy={b} r="15" fill={under} strokeWidth="4" />
            <path d={`M${a - 2} ${b - 11}q10 2 12 10l-3 10q-9-4-9-20z`} fill={side} stroke="none" />
          </g>
        ))}
        <path d="M120 110q8-8 18 2l-4 9q-12 4-14-11z" fill="#c9ced5" stroke="none" />
        {bolts.map(([a, b]) => <circle key={`${a}${b}`} cx={a} cy={b} r="10" fill="#6c7480" />)}
        {pins.map(([a, b]) => <circle key={`${a}${b}`} cx={a} cy={b} r="8.500" fill={front} />)}
        {rings.map(([a, b]) => (
          <g key={`${a}${b}`}>
            <circle cx={a} cy={b} r="8.500" fill={front} />
            <circle cx={a} cy={b} r="3" fill={under} />
          </g>
        ))}
        <ellipse cx="93" cy="259" rx="25" ry="8" fill="#717986" />
        <path d="M84 253h16l-2 13h-14z" fill="#f0f1f4" stroke="none" />
        <path d="M70 244l8-1M118 240l10-2M56 278h8M120 272h8" strokeWidth="4" />
      </g>
    </g>
  );
}

function Screw({ p }: { p: number[] }) {
  const [x1, y1, x2, y2] = p;
  return (
    <g stroke={ink} strokeWidth="2.500">
      <circle cx={x2} cy={y2 + 3} r="17" fill={side} />
      <circle cx={x2} cy={y2} r="13" fill={under} />
      <path d={`M${x1} ${y1}L${x2} ${y2}`} strokeWidth="21" />
      <path d={`M${x1} ${y1}L${x2} ${y2}`} stroke="#5f6671" strokeWidth="16" />
      <path d={`M${x1 - 2} ${y1}L${x2 - 2} ${y2}`} stroke="#7e8794" strokeWidth="7" />
      <circle cx={x1} cy={y1} r="10" fill={front} />
    </g>
  );
}

const screws = [
  [411, 215, 389, 268], [450, 213, 430, 264], [586, 203, 565, 256], [625, 200, 605, 252],
  [762, 188, 740, 242], [276, 226, 256, 280], [238, 284, 222, 320], [104, 295, 88, 332],
  [113, 400, 100, 438], [250, 390, 236, 428], [292, 386, 273, 440], [429, 376, 410, 430],
  [467, 373, 446, 428], [603, 365, 585, 415], [643, 360, 622, 412], [780, 350, 760, 405],
];

function Solenoid({ x, y }: { x: number; y: number }) {
  return (
    <g transform={`translate(${x} ${y})`} stroke={ink} strokeWidth="3">
      <path d="M41-34h25v28H41z" fill="url(#metal)" />
      <ellipse cx="53" cy="-34" rx="12" ry="3" fill={front} />
      <path d="M38-12h30v16H38z" fill="#6f7783" strokeWidth="4" />
      <path d="M40-4h28" strokeWidth="4" />
      {/* mounting flange */}
      <path d="M6 88l-8 42 44-4 60-8 22-14 14-26-50 2z" fill={under} strokeWidth="4" />
      <ellipse cx="66" cy="112" rx="50" ry="20" fill="url(#metal)" strokeWidth="4" />
      <path d="M20 122q44 22 92 2" fill="none" strokeWidth="6" />
      <path d="M0 20Q10 4 58 2t62 13l3 64Q108 92 62 98L5 84z" fill="url(#metal)" />
      <path d="M0 18Q10 3 58 2t62 13" fill="none" strokeWidth="4" />
      <ellipse cx="54" cy="56" rx="20" ry="6" fill={side} strokeWidth="5" />
      <path d="M44 62h24v22H44z" fill="url(#metal)" strokeWidth="3" />
      <path d="M20 80h20v14H20zM94 70h20v22H94z" fill="url(#metal)" strokeWidth="3" />
      <path d="M4 92l40-6M14 104h34M88 80h50M92 98l34-3M6 104l-6 22" strokeWidth="5" fill="none" />
      <path d="M20 100h16v12H20zM98 130h12v10H98z" fill={side} strokeWidth="3" />
    </g>
  );
}

function Coil({ x, y }: { x: number; y: number }) {
  return (
    <g transform={`translate(${x} ${y})`} stroke={ink} strokeWidth="3">
      <path d="M4-60h24v30H4z" fill="url(#metal)" />
      <ellipse cx="17" cy="-31" rx="18" ry="5" fill={side} strokeWidth="4" />
      <path d="M6-26h24l-3 6H9z" fill={ink} />
      <path d="M82-6l20 0 2 18-8 24-8-6v-26l-8-4z" fill={ink} />
      <path d="M12-12h11V4H12zM60-14h11V4H60z" fill="url(#metal)" strokeWidth="2.500" />
      <path d="M0 0L-16 36l8 80 16-36z" fill={side} />
      <path d="M8 78L-8 116l86-4 10-34z" fill={under} />
      <path d="M0 0L82-4l6 78L8 78z" fill={front} />
      <path d="M1 0L84-4" strokeWidth="5" />
      <path d="M14 76h20v12H14zM64 74h20v12H64zM0 112h18v14H0zM58 104h16v14H58z" fill="url(#metal)" />
      <path d="M36 82h20v20H36z" fill="url(#metal)" />
      <path d="M28 88h38M30 98h34M32 108h30" strokeWidth="4" />
      <path d="M34 112h22v28H34z" fill="url(#metal)" />
      <path d="M33 138q12 8 24 0v5q-12 8-24 0zM0 122h18v5H0z" fill={ink} />
    </g>
  );
}

function Nut({ x, y }: { x: number; y: number }) {
  return (
    <g transform={`translate(${x} ${y})`} stroke={ink} strokeWidth="3">
      <path d="M1 0h6v42H1z" fill={ink} />
      <path d="M8 6l6-4h12l4 6v24l-4 6H14l-6-4z" fill={front} />
      <path d="M11 4v36" strokeWidth="5" />
      <path d="M14 20h14M34 10v20" fill="none" />
    </g>
  );
}

function Washer({ x, y, dark }: { x: number; y: number; dark?: boolean }) {
  return (
    <g stroke={ink} strokeWidth="3">
      <circle cx={x} cy={y} r={dark ? 19 : 18} fill={dark ? "#23262b" : front} />
      <circle cx={x} cy={y} r="7" fill={dark ? side : under} />
      <circle cx={x + 1} cy={y} r="2" fill={front} stroke="none" />
    </g>
  );
}

function Assembly() {
  return (
    <svg viewBox="380 175 1443 823" className="h-full w-full" shapeRendering="crispEdges" role="img" aria-label="三联阀分解视图">
      <defs>
        <linearGradient id="metal">
          <stop offset="0" stopColor="#6c7480" />
          <stop offset=".5" stopColor="#a3afbe" />
          <stop offset=".65" stopColor="#e4e9f1" />
          <stop offset=".8" stopColor="#98a3b1" />
          <stop offset="1" stopColor="#626974" />
        </linearGradient>
      </defs>

      <g transform="translate(680 330) scale(.33333)">
        {/* end plate with two threaded ports */}
        <g stroke={ink} strokeWidth="3">
          <path d="M260 140l-12 25v15l26 226 13-28z" fill={side} />
          <path d="M287 380l161-13-6 26-168 13z" fill={under} />
          <path d="M260 140l164-13 24 240-161 12z" fill={front} />
          <path d="M310 397q40-28 76-6" fill="#777f8b" strokeWidth="4" />
          <path d="M340 386h34l-8 8h-24z" fill="#eceef1" />
          <g strokeWidth="3">
            {[[283, 234], [418, 224], [294, 339], [430, 328]].map(([a, b]) => (
              <circle key={a} cx={a} cy={b} r="10" fill="#6c7480" />
            ))}
            {[[390, 153], [373, 206], [396, 204], [301, 252], [424, 258]].map(([a, b]) => (
              <g key={a}>
                <circle cx={a} cy={b} r="8.500" fill={front} />
                <circle cx={a} cy={b} r="3" fill={under} />
              </g>
            ))}
            {[[342, 292], [369, 335]].map(([a, b]) => (
              <g key={a}>
                <circle cx={a} cy={b} r="22" fill={front} strokeWidth="4" />
                <circle cx={a} cy={b} r="16" fill={side} strokeWidth="4" />
                <path d={`M${a - 14} ${b - 2}q14-24 28 0z`} fill={under} stroke="none" />
                <path d={`M${a - 10} ${b + 4}h12v8h-8z`} fill="#eef0f3" stroke="none" />
              </g>
            ))}
          </g>
        </g>

        {/* inlet block */}
        <g stroke={ink} strokeWidth="3">
          <path d="M65 530l-14 36 29 238 8-36z" fill={side} />
          <path d="M66 622l8 6 4 70-8-20z" fill={under} />
          <path d="M88 768l182-15-8 38-182 13z" fill={under} />
          <path d="M65 530l180-13 25 236-182 15z" fill={front} />
          <g strokeWidth="3">
            {[[105, 550], [152, 546], [157, 598], [210, 625]].map(([a, b]) => (
              <g key={a}>
                <circle cx={a} cy={b} r="14" fill={front} />
                <path d={`M${a - 11} ${b - 6}q11-12 22 0l-8 5v8l-10-8z`} fill={side} stroke="none" />
              </g>
            ))}
            <circle cx="198" cy="707" r="44" fill={under} />
            <path d="M157 708q8-34 44-34 32 6 38 38 0 16-6 22-14 18-35 16-36-4-41-42z" fill={front} stroke="none" />
            <path d="M158 694q38-40 78 4v24" fill="none" />
            <path d="M162 724q14-12 30 6l-4 16q-18-4-26-22z" fill={under} />
            <path d="M82 567h10M170 534h12M134 612h10v12h-6zM232 618h9v8h-9zM142 729h10v8h-10z" fill={ink} />
            <path d="M92 772h24M90 784h20" fill="none" />
          </g>
        </g>

        <BoreBlock x={655} y={92} />
        <BoreBlock x={1117} y={49} />
      </g>

      <g transform="translate(1000 440) scale(.33333)">
        <BoreBlock x={1083} y={50} />
        <PortBlock x={735} y={110} />
        <PortBlock x={520} y={608} />
        <PortBlock x={78} y={717} />
      </g>

      <g transform="translate(1430 420) scale(.33333)">
        {/* end cover */}
        <g stroke={ink} strokeWidth="3">
          <path d="M113 82L98 115v20l26 223 12-36z" fill={side} />
          <path d="M106 100l5 26 0 36-9-14zM118 285l10 14 4 30-8-10z" fill={under} />
          <path d="M136 322l66-3-14 36-64 3z" fill={under} />
          <path d="M113 82l63-3 26 240-66 3z" fill={front} />
          <circle cx="166" cy="200" r="12" fill={under} />
          <circle cx="152" cy="245" r="12" fill={side} />
          <path d="M143 243q8-6 16 6l-6 8z" fill="#dce0e5" stroke="none" />
          <ellipse cx="176" cy="323" rx="10" ry="4" fill="#e3e6ea" />
        </g>
        <Nut x={430} y={64} />
        <Nut x={455} y={276} />
      </g>

      <g transform="translate(920 430) scale(.33333)">
        <Solenoid x={254} y={100} />
        <Solenoid x={430} y={87} />
        <Solenoid x={606} y={74} />
        {screws.map((p) => <Screw key={p.join()} p={p} />)}
        <Coil x={318} y={434} />
        <Coil x={493} y={421} />
        <Coil x={669} y={408} />

        {/* loose seals and plugs */}
        <path d="M98 206l8-6h22v32q-12 8-24 0v-20z" fill="url(#metal)" stroke={ink} strokeWidth="3" />
        <Washer x={127} y={190} />
        <Washer x={172} y={187} />
        <Washer x={196} y={290} dark />
        <Washer x={195} y={252} dark />
        <Washer x={232} y={266} />
        <circle cx="114" cy="291" r="13" fill={side} stroke={ink} strokeWidth="3" />
        <circle cx="104" cy="296" r="10" fill={front} stroke={ink} strokeWidth="3" />
        <circle cx="203" cy="280" r="9" fill={front} stroke={ink} strokeWidth="3" />
        <path d="M216 318h20v22h-18zM242 314h18l4 8v16l-6 6h-16z" fill={side} stroke={ink} strokeWidth="4" />

        {/* check valve cap */}
        <g stroke={ink} strokeWidth="3">
          <path d="M124 478h24v20q-12 8-24 0zM190 472h26v22q-12 8-26 0z" fill="url(#metal)" />
          <path d="M168 432h12v14h-12z" fill={front} />
          <path d="M118 456q50-26 102 0v20q-50 28-102 4z" fill="url(#metal)" />
          <ellipse cx="169" cy="455" rx="51" ry="11" fill={front} />
          <path d="M162 466h26v14q-12 6-26 0z" fill={side} />
        </g>
      </g>

      {/* spin centre */}
      <g shapeRendering="auto">
        <path d="M1142.500 528l3 23" stroke="#e04545" strokeWidth="1.300" />
        <path d="M1121 553h12l12-2" stroke="#3bdfe0" strokeWidth="1.300" fill="none" />
        <path d="M1145 551l-2 7" stroke="#5fdc50" />
        <circle cx="1142.500" cy="528" r="2.600" fill="#ef3838" />
        <circle cx="1121" cy="553" r="3" fill="#27e6e6" />
        <circle cx="1142.500" cy="557.500" r="2.400" fill="#3fe03f" />
      </g>
    </svg>
  );
}

/* ---------- status bar and brand mark ---------- */

function StatusBar() {
  return (
    <footer className="flex h-[38px] shrink-0 items-start border-t-2 border-[#97999c] bg-[#eeeff1] pt-[3px] text-[#3f4042]">
      <button type="button" aria-label="模型树" className="mt-[7px] ml-1.5 flex h-[22px] w-[22px] items-center justify-center border border-[#a9abae] bg-[#dfe1e3]">
        <Ico>
          <path d="M4 3v10M4 8h7" stroke="#888" />
          <path d="M2.500 1h3v3h-3zM2.500 6.500h3v3h-3zM2.500 12h3v3h-3zM10.500 6.500h3v3h-3z" fill="#f4f4f4" stroke="#3d3d3d" />
        </Ico>
      </button>
      <button type="button" aria-label="浏览器" className="mt-2.5 ml-[7px]">
        <Ico>
          <circle cx="8" cy="8" r="6.500" fill="#3ba2d4" stroke="#2d6f92" />
          <path d="M3 6q4-5 6-1t-4 5zM10 9q3-1 3 1t-4 3z" fill="#d5effa" />
          <path d="M1 15q-2-3 5-9t9-5q2 3-5 9t-9 5z" stroke="#6d8b9b" />
        </Ico>
      </button>
      <button type="button" aria-label="全屏" className="mt-2.5 ml-2.5">
        <Ico>
          <path d="M.5.500h15v15H.5z" fill="#e9f2f6" stroke="#4a6d7d" />
          <path d="M15.500.500v15H.5" stroke="#15506e" strokeWidth="1.500" />
        </Ico>
      </button>
      <span className="mt-[7px] ml-3 h-[22px] w-px bg-[#b5b7b9]" />
      <p className="ml-[6px] flex items-center gap-1 pt-1">
        <span className="size-[5px] rounded-full bg-[#155f83]" />
        将不显示注释。
      </p>
      <div className="ml-auto flex h-[30px] items-start pr-[18px]">
        <span className="h-[30px] w-px bg-[#b5b7b9]" />
        <span className="ml-10 h-[30px] w-px bg-[#b5b7b9]" />
        <button type="button" aria-label="查找" className="mt-0.5 ml-0.5 flex h-6 items-center border border-[#b9bbbd] bg-[#f8f8f8] pl-[5px]">
          <Binoculars />
          <span className="ml-1.5 flex h-full w-3.5 items-center justify-center border-l border-[#b9bbbd]"><Down /></span>
        </button>
        <span className="ml-0.5 h-[30px] w-px bg-[#b5b7b9]" />
        <button type="button" aria-label="选择几何" className="mt-0.5 ml-0.5 flex h-7 w-10 items-center justify-center border border-[#a9abae] bg-[#f8f8f8]">
          <svg viewBox="0 0 18 18" className="size-[18px]" fill="none" aria-hidden="true">
            <path d="M.5 4.500l4-4h13v12l-4 5H.5zM.5 4.500h13v13M13.500 4.500l4-4" stroke="#3d3d3d" />
            <path d="M3 15V7h3v5h5v3z" fill="#fbe0a2" stroke="#c59442" />
            <path d="M6 7l1-1h4v5l-1 1H6z" fill="#58b9de" />
          </svg>
        </button>
        <div className="relative mt-[3px] ml-[97px] h-[25px] w-[177px]">
          <select aria-label="选择过滤器" defaultValue="几何" className="h-full w-full appearance-none border border-[#a9abae] bg-[#f8f8f8] pl-[7px] outline-none">
            <option>几何</option>
          </select>
          <span className="pointer-events-none absolute top-px right-px flex h-[23px] w-4 items-center justify-center border-l border-[#b9bbbd]"><Down /></span>
        </div>
      </div>
      <svg viewBox="0 0 12 12" className="absolute right-0.5 bottom-0.5 size-3" aria-hidden="true">
        <path d="M0 12L12 0M4 12l8-8M8 12l4-4" stroke="#b5b7b9" strokeWidth="1.500" />
      </svg>
    </footer>
  );
}

function Brand() {
  return (
    <div className="pointer-events-none absolute right-4 bottom-1.5 flex flex-col items-center">
      <svg viewBox="0 0 18 42" className="absolute top-[-19px] left-[67px] h-[42px] w-[18px]" aria-hidden="true">
        <path d="M5 0Q19 10 17.500 23 16 34 6 41.500L1 38q7-7 8.500-12Q9 16 1 8.500 7 12 10 20 12 10 5 0z" fill="#ff6a33" />
      </svg>
      <p className="font-['Noto_Sans_CJK_SC',sans-serif] text-[42px] leading-[42px] font-light italic text-black">
        <span className="text-[#ff6a33]">野火</span>论坛
      </p>
      <p className="font-['DejaVu_Sans',sans-serif] text-[15px] leading-5 italic text-[#8f9092]">www.proewildfire.cn</p>
    </div>
  );
}

export default function App() {
  return (
    <div className="relative flex h-screen min-h-[600px] flex-col overflow-hidden border-x-4 border-t-4 border-[#b9bdbf] bg-[#e3e3e3] font-['Noto_Sans','Noto_Sans_CJK_SC',sans-serif] text-[12px] leading-4">
      <header className="shrink-0">
        <div className="grid h-8 grid-cols-[1fr_auto_1fr] items-center pb-1">
          <QuickAccess />
          <h1 className="text-[13px] text-[#b4b7b9]">三联阀 (活动的) - Creo Parametric 4.0</h1>
          <WindowButtons />
        </div>
        <TabRow />
        <Ribbon />
      </header>
      <main className="flex min-h-0 flex-1">
        <ModelTree />
        <div className="relative min-w-0 flex-1 overflow-hidden bg-[#e8e9ed]">
          <Assembly />
          <ViewToolbar />
          <p className="absolute bottom-[133px] left-2 text-[#8c9099]">分解状态:默认分解(+)</p>
        </div>
      </main>
      <StatusBar />
      <Brand />
    </div>
  );
}
